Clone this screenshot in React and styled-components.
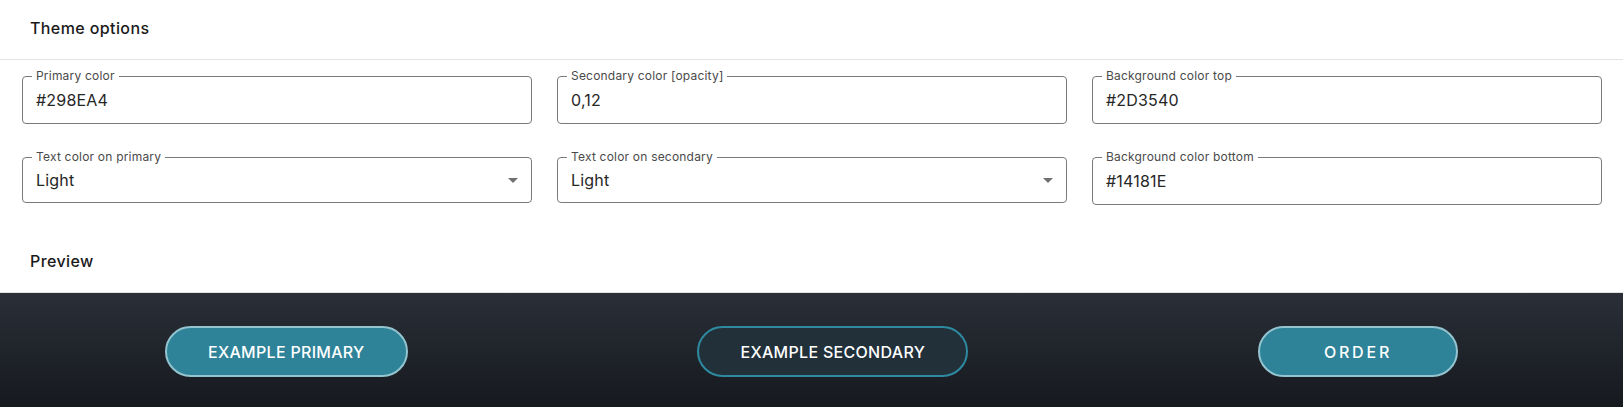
import React from "react";
import styled, { createGlobalStyle } from "styled-components";

const GlobalStyle = createGlobalStyle`
  * { box-sizing: border-box; }
  body {
    margin: 0;
    background: #fff;
    font-family: Inter, "Noto Sans", sans-serif;
    color: #1c1c1c;
  }
`;

const Page = styled.div`
  width: 1623px;
  min-height: 407px;
  display: flex;
  flex-direction: column;
`;

const SectionTitle = styled.div`
  height: 60px;
  display: flex;
  align-items: center;
  padding: 0 0 3px 30px;
  font-size: 16px;
  font-weight: 500;
  letter-spacing: 0.4px;
  color: #1a1a1a;
  border-bottom: 1px solid #e3e3e3;
`;

const FormGrid = styled.div`
  display: grid;
  grid-template-columns: repeat(3, 1fr);
  column-gap: 25px;
  row-gap: 33px;
  align-items: start;
  padding: 16px 21px 28px 22px;
`;

const Field = styled.div`
  position: relative;
  height: ${(p) => (p.$select ? 46 : 48)}px;
  border: 1px solid #7a7a7a;
  border-radius: 4px;
  display: flex;
  align-items: center;
  justify-content: space-between;
  padding: 0 13px;
`;

const Label = styled.span`
  position: absolute;
  top: -9px;
  left: 9px;
  padding: 0 4px;
  background: #fff;
  font-size: 12px;
  line-height: 16px;
  letter-spacing: 0.2px;
  color: #4a4a4a;
  white-space: nowrap;
`;

const Value = styled.span`
  font-size: 16px;
  letter-spacing: 0.2px;
  color: #262626;
`;

const Arrow = styled.span`
  width: 0;
  height: 0;
  border-left: 5px solid transparent;
  border-right: 5px solid transparent;
  border-top: 5px solid #707070;
`;

const Preview = styled.div`
  flex: 1;
  display: flex;
  justify-content: space-between;
  align-items: flex-start;
  padding: 33px 165px 30px;
  background: linear-gradient(180deg, #2a2f38 0%, #16191e 100%);
`;

const PillButton = styled.button`
  height: 51px;
  min-width: ${(p) => (p.$min ? p.$min : 0)}px;
  padding: 0 41px;
  border-radius: 26px;
  border: 2px solid ${(p) => (p.$variant === "secondary" ? "#2d8aa0" : "#93c4cf")};
  background: ${(p) => (p.$variant === "secondary" ? "#22303a" : "#2e8398")};
  color: #fff;
  font-family: inherit;
  font-size: 16px;
  font-weight: 500;
  letter-spacing: ${(p) => (p.$spaced ? "2.8px" : "0.3px")};
  text-transform: uppercase;
  cursor: pointer;
`;

const fields = [
  { label: "Primary color", value: "#298EA4" },
  { label: "Secondary color [opacity]", value: "0,12" },
  { label: "Background color top", value: "#2D3540" },
  { label: "Text color on primary", value: "Light", select: true },
  { label: "Text color on secondary", value: "Light", select: true },
  { label: "Background color bottom", value: "#14181E" },
];

export default function App() {
  return (
    <>
      <GlobalStyle />
      <Page>
        <SectionTitle>Theme options</SectionTitle>
        <FormGrid>
          {fields.map((f) => (
            <Field key={f.label} $select={f.select}>
              <Label>{f.label}</Label>
              <Value>{f.value}</Value>
              {f.select && <Arrow />}
            </Field>
          ))}
        </FormGrid>
        <SectionTitle>Preview</SectionTitle>
        <Preview>
          <PillButton>Example primary</PillButton>
          <PillButton $variant="secondary">Example secondary</PillButton>
          <PillButton $min={200} $spaced>Order</PillButton>
        </Preview>
      </Page>
    </>
  );
}
